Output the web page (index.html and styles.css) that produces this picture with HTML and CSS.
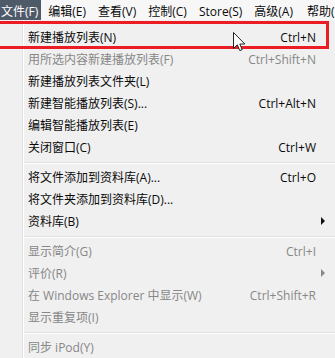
FILE: index.html
```html
<!DOCTYPE html>
<html lang="zh-CN">
<head>
<meta charset="utf-8">
<link rel="stylesheet" href="styles.css">
</head>
<body>
<div class="screen">
  <div class="menubar">
    <span class="mb-item active">文件(F)</span>
    <span class="mb-item">编辑(E)</span>
    <span class="mb-item">查看(V)</span>
    <span class="mb-item">控制(C)</span>
    <span class="mb-item">Store(S)</span>
    <span class="mb-item">高级(A)</span>
    <span class="mb-item">帮助(H)</span>
  </div>
  <div class="menu">
    <div class="item"><span class="label">新建播放列表(N)</span><span class="key">Ctrl+N</span><span class="sub"></span></div>
    <div class="item disabled"><span class="label">用所选内容新建播放列表(F)</span><span class="key">Ctrl+Shift+N</span><span class="sub"></span></div>
    <div class="item"><span class="label">新建播放列表文件夹(L)</span><span class="key"></span><span class="sub"></span></div>
    <div class="item"><span class="label">新建智能播放列表(S)...</span><span class="key">Ctrl+Alt+N</span><span class="sub"></span></div>
    <div class="item"><span class="label">编辑智能播放列表(E)</span><span class="key"></span><span class="sub"></span></div>
    <div class="item"><span class="label">关闭窗口(C)</span><span class="key">Ctrl+W</span><span class="sub"></span></div>
    <div class="sep"></div>
    <div class="item"><span class="label">将文件添加到资料库(A)...</span><span class="key">Ctrl+O</span><span class="sub"></span></div>
    <div class="item"><span class="label">将文件夹添加到资料库(D)...</span><span class="key"></span><span class="sub"></span></div>
    <div class="item"><span class="label">资料库(B)</span><span class="key"></span><span class="sub"><i class="arrow"></i></span></div>
    <div class="sep"></div>
    <div class="item disabled"><span class="label">显示简介(G)</span><span class="key">Ctrl+I</span><span class="sub"></span></div>
    <div class="item disabled"><span class="label">评价(R)</span><span class="key"></span><span class="sub"><i class="arrow"></i></span></div>
    <div class="item disabled"><span class="label">在 Windows Explorer 中显示(W)</span><span class="key">Ctrl+Shift+R</span><span class="sub"></span></div>
    <div class="item disabled"><span class="label">显示重复项(I)</span><span class="key"></span><span class="sub"></span></div>
    <div class="sep"></div>
    <div class="item disabled"><span class="label">同步 iPod(Y)</span><span class="key"></span><span class="sub"></span></div>
  </div>
  <div class="annot"></div>
  <svg class="cursor" width="13" height="20" viewBox="0 0 13 20">
    <path d="M0.5 0.5 L0.5 16.5 L4.3 12.8 L6.8 18.6 L9.2 17.6 L6.8 12 L11.8 12 Z" fill="#fff" stroke="#222" stroke-width="1" stroke-linejoin="round"/>
  </svg>
</div>
</body>
</html>
```
FILE: styles.css
```css
html, body {
  margin: 0;
  padding: 0;
  background: #f0f0f0;
}
.screen {
  position: relative;
  width: 335px;
  height: 358px;
  overflow: hidden;
  font-family: "Open Sans", "Noto Sans CJK SC", sans-serif;
  font-size: 12px;
  color: #0a0a0a;
}
.menubar {
  display: flex;
  height: 20px;
  background: #f7f7f7;
  white-space: nowrap;
  margin-left: -5px;
}
.mb-item {
  box-sizing: border-box;
  height: 20px;
  padding: 4px 6px 0 6px;
  line-height: 16px;
}
.mb-item:last-child {
  padding-left: 8px;
}
.mb-item.active {
  background: #4f5a69;
  color: #fff;
  padding-right: 3px;
  margin-right: 1px;
}
.menu {
  padding-top: 6px;
  background-color: #f0f0f0;
  background-image: linear-gradient(to right, transparent 22px, #e1e2e3 22px, #e1e2e3 23px, #fff 23px, #fff 24px, transparent 24px);
}
.item {
  display: grid;
  grid-template-columns: 1fr auto 19px;
  align-items: center;
  height: 22px;
  padding-left: 28px;
  white-space: nowrap;
}
.item.disabled {
  color: #878787;
}
.key {
  text-align: right;
}
.sub {
  display: flex;
  align-items: center;
}
.arrow {
  display: block;
  width: 0;
  height: 0;
  margin-left: 5px;
  border-left: 4px solid #111;
  border-top: 4px solid transparent;
  border-bottom: 4px solid transparent;
}
.disabled .arrow {
  border-left-color: #878787;
}
.sep {
  margin: 4px 0 2px 24px;
  border-top: 1px solid #e0e0e0;
  border-bottom: 1px solid #fff;
}
.annot {
  position: absolute;
  left: -4px;
  top: 21px;
  width: 327px;
  height: 22px;
  border: 3px solid #ec1c24;
}
.cursor {
  position: absolute;
  left: 233px;
  top: 32px;
}
```
